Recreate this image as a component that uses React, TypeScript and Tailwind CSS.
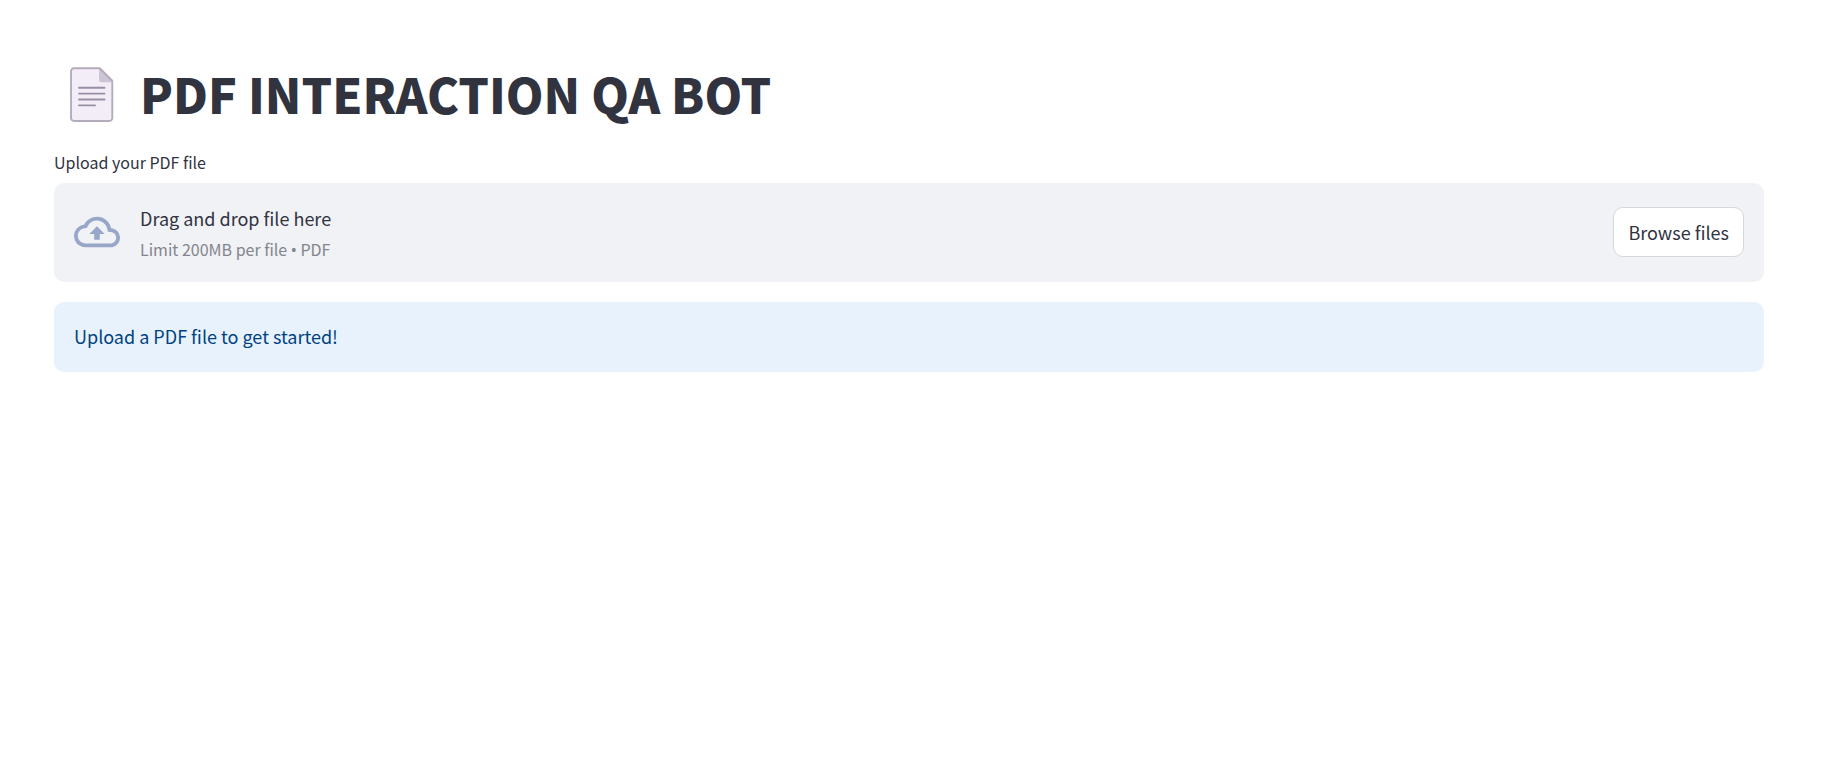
import { useRef } from "react";

function DocumentIcon() {
  return (
    <svg viewBox="0 0 44 56" className="h-14 w-11 shrink-0" aria-hidden="true">
      <path
        d="M4 1.2H29.5L42.3 14V51a3 3 0 0 1-3 3H4a3 3 0 0 1-3-3V4.2a3 3 0 0 1 3-3z"
        fill="#f3edf8"
        stroke="#b4abbb"
        strokeWidth="1.9"
      />
      <path d="M29 1.5V13a2.2 2.2 0 0 0 2.2 2.2H42.5V14L30 1.5z" fill="#cdc4d6" />
      <path d="M29.5 1.2 42.3 14" stroke="#b4abbb" strokeWidth="1.9" />
      <path
        d="M9 20.8H34.5M9 26.6H34.5M9 32.5H34.5M9 38.4H25"
        stroke="#998ea4"
        strokeWidth="1.9"
        strokeLinecap="round"
      />
    </svg>
  );
}

function CloudUploadIcon() {
  return (
    <svg viewBox="0 0 24 24" fill="currentColor" className="size-[46px] shrink-0 text-[#98a6c8]" aria-hidden="true">
      <path d="M19.35 10.04A7.49 7.49 0 0 0 12 4C9.11 4 6.6 5.64 5.35 8.04A5.994 5.994 0 0 0 0 14c0 3.31 2.69 6 6 6h13c2.76 0 5-2.24 5-5 0-2.64-2.05-4.78-4.65-4.96zM19 18H6c-2.21 0-4-1.79-4-4 0-2.05 1.53-3.76 3.56-3.97l1.07-.11.5-.95A5.469 5.469 0 0 1 12 6c2.62 0 4.88 1.86 5.39 4.43l.3 1.5 1.53.11A2.98 2.98 0 0 1 22 15c0 1.65-1.35 3-3 3zM8 13h2.55v3h2.9v-3H16l-4-4z" />
    </svg>
  );
}

export default function App() {
  const fileInput = useRef<HTMLInputElement>(null);

  return (
    <main className="min-h-screen bg-white pt-[67px] pr-[68px] pb-14 pl-[54px] font-['Noto_Sans_CJK_SC','Noto_Sans',sans-serif] text-[#31333f]">
      <h1 className="flex items-start gap-[26px] pl-4 text-5xl leading-[52px] font-black">
        <DocumentIcon />
        PDF INTERACTION QA BOT
      </h1>

      <label htmlFor="pdf-file" className="mt-7 block text-base leading-[22px]">
        Upload your PDF file
      </label>
      <input ref={fileInput} id="pdf-file" type="file" accept="application/pdf" className="hidden" />
      <section className="mt-[10px] flex items-center gap-5 rounded-[10px] bg-[#f0f2f6] px-5 pt-[19px] pb-5">
        <CloudUploadIcon />
        <div className="flex grow flex-col gap-[2px]">
          <span className="text-lg leading-[33px]">Drag and drop file here</span>
          <small className="text-base leading-[25px] text-[#84858c]">
            Limit 200MB per file <span className="font-['Noto_Sans'] leading-none">•</span> PDF
          </small>
        </div>
        <button
          type="button"
          onClick={() => fileInput.current?.click()}
          className="h-[50px] rounded-[10px] border border-[#d6d6d9] bg-white px-[14px] text-lg leading-8"
        >
          Browse files
        </button>
      </section>

      <div role="status" className="mt-5 rounded-[10px] bg-[#e8f2fc] px-5 pt-[19px] pb-[21px] text-lg leading-[30px] text-[#004280]">
        Upload a PDF file to get started!
      </div>
    </main>
  );
}
